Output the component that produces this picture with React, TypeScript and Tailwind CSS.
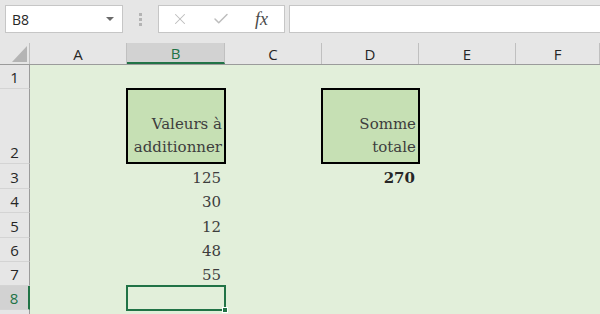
import { X, Check } from "lucide-react";

const cols = [
  { id: "A", w: "w-[97px]" },
  { id: "B", w: "w-[98px]" },
  { id: "C", w: "w-[97px]" },
  { id: "D", w: "w-[97px]" },
  { id: "E", w: "w-[97px]" },
  { id: "F", w: "flex-1" },
];

type Row = { n: number; h: string; b?: string; d?: string };

const rows: Row[] = [
  { n: 1, h: "h-[24px]" },
  { n: 2, h: "h-[75px]" },
  { n: 3, h: "h-[25px]", b: "125", d: "270" },
  { n: 4, h: "h-[24px]", b: "30" },
  { n: 5, h: "h-[25px]", b: "12" },
  { n: 6, h: "h-[24px]", b: "48" },
  { n: 7, h: "h-[24px]", b: "55" },
  { n: 8, h: "h-[24px]" },
  { n: 9, h: "h-[24px]" },
];

const uiFont = "font-['Open_Sans','Noto_Sans',sans-serif]";
const cellFont = "font-['DejaVu_Serif','Liberation_Serif',serif]";

function HeaderBox({ label }: { label: string }) {
  return (
    <div
      className={`flex h-full w-full flex-col items-end justify-end border-2 border-black bg-[#c6e0b4] pb-[3px] pr-[2px] text-[15px] leading-[23px] text-[#3d3d3d] ${cellFont}`}
    >
      {label.split("\n").map((l) => (
        <span key={l}>{l}</span>
      ))}
    </div>
  );
}

export default function App() {
  return (
    <div className={`flex h-[314px] w-[600px] flex-col overflow-hidden bg-[#e6e6e6] ${uiFont}`}>
      {/* formula bar */}
      <div className="flex h-[43px] shrink-0 items-start pt-[5px]">
        <div className="ml-[5px] flex h-[28px] w-[118px] items-center border border-[#c6c6c6] bg-white pl-[6px] pr-[8px]">
          <span className="flex-1 text-[14px] text-[#262626]">B8</span>
          <span className="h-0 w-0 border-x-[4px] border-t-[4px] border-x-transparent border-t-[#6a6a6a]" />
        </div>
        <div className="flex w-[35px] flex-col items-center gap-[2px] pt-[8px]">
          <span className="h-[3px] w-[3px] bg-[#b4b4b4]" />
          <span className="h-[3px] w-[3px] bg-[#b4b4b4]" />
          <span className="h-[3px] w-[3px] bg-[#b4b4b4]" />
        </div>
        <div className="flex h-[28px] w-[127px] items-center border border-[#c6c6c6] bg-white">
          <X size={18} strokeWidth={1.4} className="ml-[12px] text-[#bdbdbd]" />
          <Check size={18} strokeWidth={2} className="ml-[23px] text-[#bdbdbd]" />
          <span className="ml-[25px] font-['Liberation_Serif',serif] text-[18px] italic text-[#4a4a4a]">
            fx
          </span>
        </div>
        <div className="ml-[4px] h-[28px] flex-1 border border-[#c6c6c6] border-r-0 bg-white" />
      </div>

      {/* column header */}
      <div className="flex h-[22px] shrink-0 border-b border-[#9b9b9b] bg-[#e6e6e6]">
        <div className="flex w-[30px] shrink-0 items-end justify-end border-r border-[#c0c0c0] pb-[2px] pr-[2px]">
          <span className="h-0 w-0 border-b-[16px] border-l-[15px] border-l-transparent border-b-[#b4b4b4]" />
        </div>
        {cols.map((c) => (
          <div
            key={c.id}
            className={`${c.w} flex shrink-0 items-center justify-center border-r border-[#c0c0c0] pt-[2px] text-[15px] ${
              c.id === "B"
                ? "border-b-2 border-b-[#217346] bg-[#d2d2d2] text-[#217346]"
                : "text-[#262626]"
            }`}
          >
            {c.id}
          </div>
        ))}
      </div>

      {/* grid */}
      <div className="flex flex-1 flex-col bg-[#e2efda]">
        {rows.map((r) => (
          <div key={r.n} className={`flex ${r.h} shrink-0`}>
            <div
              className={`flex w-[30px] shrink-0 items-end justify-center border-b border-r border-b-[#d4d4d4] text-[15px] leading-[22px] ${
                r.n === 8
                  ? "border-r-2 border-r-[#217346] bg-[#d2d2d2] text-[#217346]"
                  : "border-r-[#9b9b9b] bg-[#e6e6e6] text-[#262626]"
              }`}
            >
              {r.n < 9 ? r.n : ""}
            </div>
            {cols.map((c) => (
              <div key={c.id} className={`${c.w} relative shrink-0`}>
                {r.n === 2 && (c.id === "B" || c.id === "D") && (
                  <div className="absolute -left-px -right-px -top-px bottom-0">
                    <HeaderBox label={c.id === "B" ? "Valeurs à\nadditionner" : "Somme\ntotale"} />
                  </div>
                )}
                {c.id === "B" && r.b && (
                  <div className={`flex h-full items-end justify-end pr-[4px] text-[15px] leading-[22px] text-[#3d3d3d] ${cellFont}`}>
                    {r.b}
                  </div>
                )}
                {c.id === "D" && r.d && (
                  <div className={`flex h-full items-end justify-end pr-[4px] text-[15px] font-bold leading-[22px] text-[#262626] ${cellFont}`}>
                    {r.d}
                  </div>
                )}
                {r.n === 8 && c.id === "B" && (
                  <div className="absolute -left-px -right-px -top-px -bottom-px border-2 border-[#217346]">
                    <span className="absolute -bottom-[4px] -right-[4px] h-[6px] w-[6px] border border-white bg-[#217346]" />
                  </div>
                )}
              </div>
            ))}
          </div>
        ))}
      </div>
    </div>
  );
}
